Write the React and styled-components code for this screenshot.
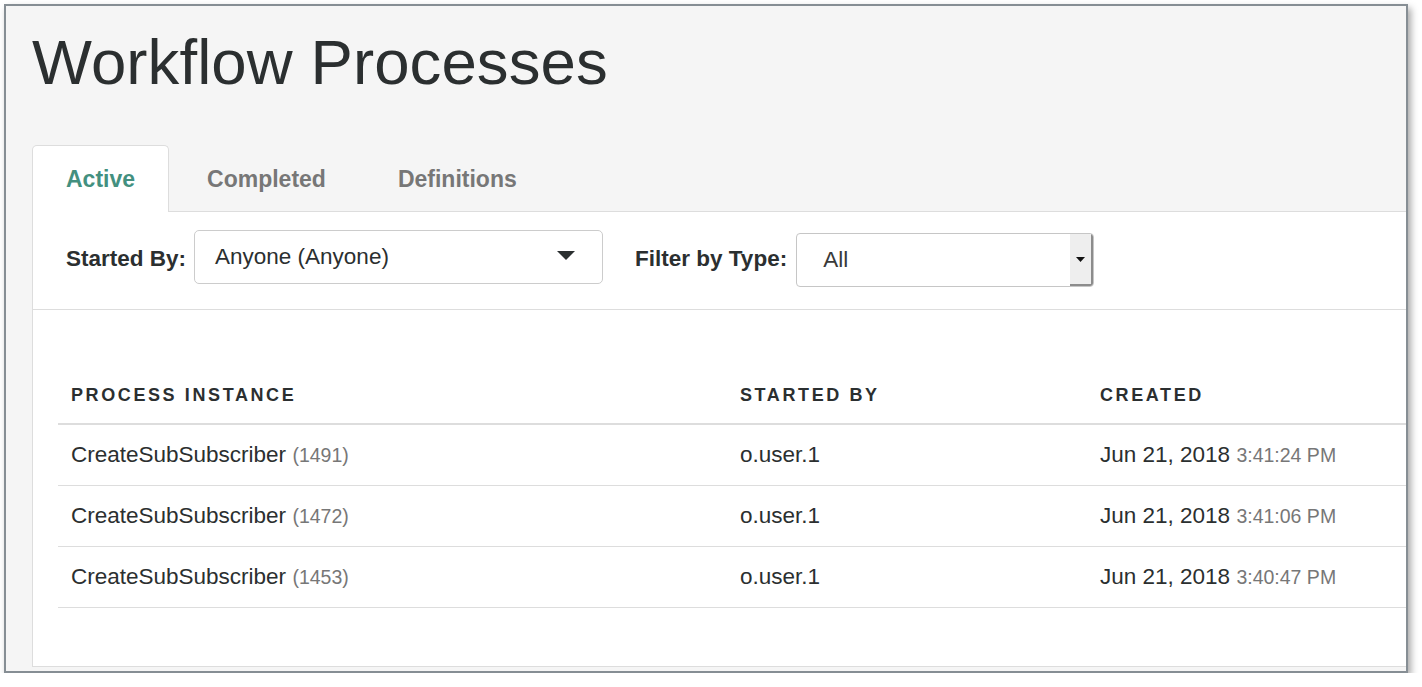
import React from "react";
import styled, { createGlobalStyle } from "styled-components";

const GlobalStyle = createGlobalStyle`
  html, body { margin: 0; padding: 0; background: #ffffff; }
  body { font-family: "Liberation Sans", Arial, Helvetica, sans-serif; color: #2b2f30; }
  * { box-sizing: border-box; }
`;

const Frame = styled.div`
  margin: 4px 0 0 4px;
  width: 1404px;
  height: 669px;
  border: 2px solid #868e94;
  box-shadow: 3px 4px 7px rgba(0, 0, 0, 0.35);
  background: #f5f5f5;
  display: flex;
  flex-direction: column;
  padding-left: 26px;
  overflow: hidden;
`;

const Title = styled.h1`
  margin: 0;
  padding-top: 21px;
  font-size: 63.5px;
  line-height: 70px;
  font-weight: 400;
  color: #2b2f30;
  letter-spacing: 0.1px;
`;

const TabBar = styled.div`
  margin-top: 48px;
  display: flex;
  border-bottom: 1px solid #dddddd;
  height: 67px;
`;

const Tab = styled.div`
  height: 67px;
  margin-bottom: -1px;
  margin-right: 4px;
  padding: 0 33px;
  display: flex;
  align-items: center;
  font-size: 23px;
  font-weight: 700;
  border: 1px solid ${(p) => (p.$active ? "#dddddd" : "transparent")};
  border-bottom: none;
  border-radius: 5px 5px 0 0;
  background: ${(p) => (p.$active ? "#ffffff" : "transparent")};
  color: ${(p) => (p.$active ? "#43907f" : "#777777")};
`;

const Panel = styled.div`
  flex: 1;
  margin-bottom: 4px;
  background: #ffffff;
  border-left: 1px solid #dddddd;
  border-bottom: 1px solid #dddddd;
  display: flex;
  flex-direction: column;
`;

const FilterRow = styled.div`
  height: 98px;
  border-bottom: 1px solid #dddddd;
  display: flex;
  align-items: center;
  padding-left: 33px;
`;

const Label = styled.span`
  font-size: 22.5px;
  font-weight: 700;
  color: #2b2f30;
  margin-bottom: 3px;
  margin-left: ${(p) => p.$ml || 0}px;
  margin-right: ${(p) => p.$mr || 0}px;
`;

const SelectBox = styled.div`
  position: relative;
  width: 409px;
  height: 54px;
  margin-bottom: 8px;
  border: 1px solid #cccccc;
  border-radius: 5px;
  padding-left: 20px;
  display: flex;
  align-items: center;
  font-size: 22.5px;
  color: #2b2f30;
`;

const Caret = styled.svg`
  position: absolute;
  right: 27px;
  top: 20px;
`;

const NativeSelect = styled.div`
  width: 298px;
  height: 54px;
  margin-top: -2px;
  border: 1px solid #c6c6c6;
  border-radius: 4px;
  display: flex;
  align-items: center;
  overflow: hidden;
`;

const NativeValue = styled.span`
  flex: 1;
  padding-left: 26px;
  font-size: 22.5px;
  color: #3a3a3a;
`;

const NativeButton = styled.div`
  width: 23px;
  align-self: stretch;
  background: #eeeeee;
  box-shadow: inset -2px -2px 0 #8c8c8c;
  display: flex;
  align-items: center;
  justify-content: center;
  padding-right: 2px;
`;

const Table = styled.div`
  margin: 55px 0 0 25px;
  display: flex;
  flex-direction: column;
`;

const Row = styled.div`
  display: grid;
  grid-template-columns: 669px 360px 1fr;
  align-items: center;
  height: ${(p) => (p.$head ? 60 : 61)}px;
  border-bottom: ${(p) => (p.$head ? "2px" : "1px")} solid #dddddd;
`;

const HeadCell = styled.div`
  padding-left: 13px;
  padding-top: 2px;
  font-size: 18px;
  font-weight: 700;
  letter-spacing: 2.6px;
  color: #2b2f30;
`;

const Cell = styled.div`
  padding-left: 13px;
  font-size: 22.5px;
  color: #2b2f30;
  white-space: nowrap;
`;

const Muted = styled.span`
  font-size: 19.5px;
  color: #777777;
`;

const rows = [
  { id: 1491, user: "o.user.1", date: "Jun 21, 2018", time: "3:41:24 PM" },
  { id: 1472, user: "o.user.1", date: "Jun 21, 2018", time: "3:41:06 PM" },
  { id: 1453, user: "o.user.1", date: "Jun 21, 2018", time: "3:40:47 PM" },
];

export default function App() {
  return (
    <>
      <GlobalStyle />
      <Frame>
        <Title>Workflow Processes</Title>
        <TabBar>
          <Tab $active>Active</Tab>
          <Tab>Completed</Tab>
          <Tab>Definitions</Tab>
        </TabBar>
        <Panel>
          <FilterRow>
            <Label $mr={8}>Started By:</Label>
            <SelectBox>
              Anyone (Anyone)
              <Caret width="18" height="9" viewBox="0 0 18 9">
                <path d="M0 0 L18 0 L9 9 Z" fill="#2b2f30" />
              </Caret>
            </SelectBox>
            <Label $ml={32} $mr={9}>Filter by Type:</Label>
            <NativeSelect>
              <NativeValue>All</NativeValue>
              <NativeButton>
                <svg width="9" height="5" viewBox="0 0 9 5">
                  <path d="M0 0 L9 0 L4.5 5 Z" fill="#111" />
                </svg>
              </NativeButton>
            </NativeSelect>
          </FilterRow>
          <Table>
            <Row $head>
              <HeadCell>PROCESS INSTANCE</HeadCell>
              <HeadCell>STARTED BY</HeadCell>
              <HeadCell>CREATED</HeadCell>
            </Row>
            {rows.map((r) => (
              <Row key={r.id}>
                <Cell>
                  CreateSubSubscriber <Muted>({r.id})</Muted>
                </Cell>
                <Cell>{r.user}</Cell>
                <Cell>
                  {r.date} <Muted>{r.time}</Muted>
                </Cell>
              </Row>
            ))}
          </Table>
        </Panel>
      </Frame>
    </>
  );
}
